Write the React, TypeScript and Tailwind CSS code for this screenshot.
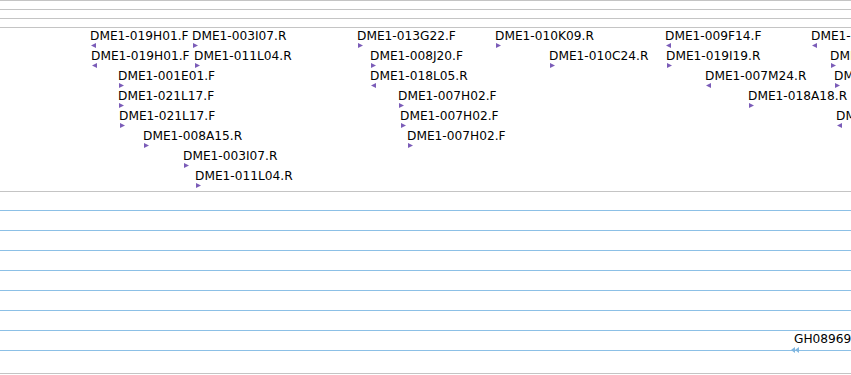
type Dir = "L" | "R";

type Feature = { x: number; row: number; name: string; dir: Dir };

// glyph-left x positions read from the track, rows are 20px apart
const features: Feature[] = [
  { x: 90, row: 0, name: "DME1-019H01.F", dir: "L" },
  { x: 192, row: 0, name: "DME1-003I07.R", dir: "R" },
  { x: 357, row: 0, name: "DME1-013G22.F", dir: "R" },
  { x: 495, row: 0, name: "DME1-010K09.R", dir: "R" },
  { x: 665, row: 0, name: "DME1-009F14.F", dir: "L" },
  { x: 811, row: 0, name: "DME1-015B03.F", dir: "L" },

  { x: 91, row: 1, name: "DME1-019H01.F", dir: "L" },
  { x: 194, row: 1, name: "DME1-011L04.R", dir: "R" },
  { x: 370, row: 1, name: "DME1-008J20.F", dir: "R" },
  { x: 549, row: 1, name: "DME1-010C24.R", dir: "R" },
  { x: 666, row: 1, name: "DME1-019I19.R", dir: "R" },
  { x: 830, row: 1, name: "DME1-012D11.R", dir: "R" },

  { x: 118, row: 2, name: "DME1-001E01.F", dir: "R" },
  { x: 370, row: 2, name: "DME1-018L05.R", dir: "L" },
  { x: 705, row: 2, name: "DME1-007M24.R", dir: "L" },
  { x: 834, row: 2, name: "DME1-016C09.F", dir: "R" },

  { x: 118, row: 3, name: "DME1-021L17.F", dir: "R" },
  { x: 398, row: 3, name: "DME1-007H02.F", dir: "R" },
  { x: 748, row: 3, name: "DME1-018A18.R", dir: "R" },

  { x: 119, row: 4, name: "DME1-021L17.F", dir: "R" },
  { x: 400, row: 4, name: "DME1-007H02.F", dir: "R" },
  { x: 836, row: 4, name: "DME1-004K12.R", dir: "L" },

  { x: 143, row: 5, name: "DME1-008A15.R", dir: "R" },
  { x: 407, row: 5, name: "DME1-007H02.F", dir: "R" },

  { x: 183, row: 6, name: "DME1-003I07.R", dir: "R" },

  { x: 195, row: 7, name: "DME1-011L04.R", dir: "R" },
];

const Arrow = ({ dir }: { dir: Dir }) => (
  <svg width="5" height="5" viewBox="0 0 5 5" className="block">
    <polygon points={dir === "L" ? "5,0 0,2.5 5,5" : "0,0 5,2.5 0,5"} fill="#7b5cb8" />
  </svg>
);

const App = () => {
  return (
    <div
      className="w-[851px] h-[375px] overflow-hidden bg-white text-black"
      style={{ fontFamily: '"DejaVu Sans", sans-serif' }}
    >
      {/* ruler lines */}
      <div className="h-[9px] border-t border-[#c4c4c4]" />
      <div className="h-[9px] border-t border-[#c4c4c4]" />
      <div className="h-[9px] border-t border-[#c4c4c4]" />

      {/* EST track */}
      <div className="relative h-[164px] overflow-hidden border-t border-[#c4c4c4]">
        {features.map((f, i) => (
          <div
            key={i}
            className="absolute flex flex-col"
            style={{ left: f.x, top: 1 + f.row * 20 }}
          >
            <span className="text-[12.2px] leading-[14px] whitespace-nowrap">{f.name}</span>
            <div className="ml-[1px]">
              <Arrow dir={f.dir} />
            </div>
          </div>
        ))}
      </div>

      {/* cDNA track */}
      <div className="relative overflow-hidden">
        <div className="h-[19px] border-t border-[#c4c4c4]" />
        {Array.from({ length: 7 }).map((_, i) => (
          <div key={i} className="h-[20px] border-t border-[#8cc0e6]" />
        ))}
        <div className="h-[23px] border-t border-[#8cc0e6]" />
        <div className="h-[2px] border-t border-[#c4c4c4]" />

        <span className="absolute left-[794px] top-[141px] text-[12.2px] leading-[14px] whitespace-nowrap">
          GH08969
        </span>
        <svg width="9" height="6" viewBox="0 0 9 6" className="absolute left-[791px] top-[156px]">
          <polygon points="4,0 0,3 4,6" fill="#7fb6e0" />
          <polygon points="8,0 4,3 8,6" fill="#7fb6e0" />
        </svg>
      </div>
    </div>
  );
};

export default App;
